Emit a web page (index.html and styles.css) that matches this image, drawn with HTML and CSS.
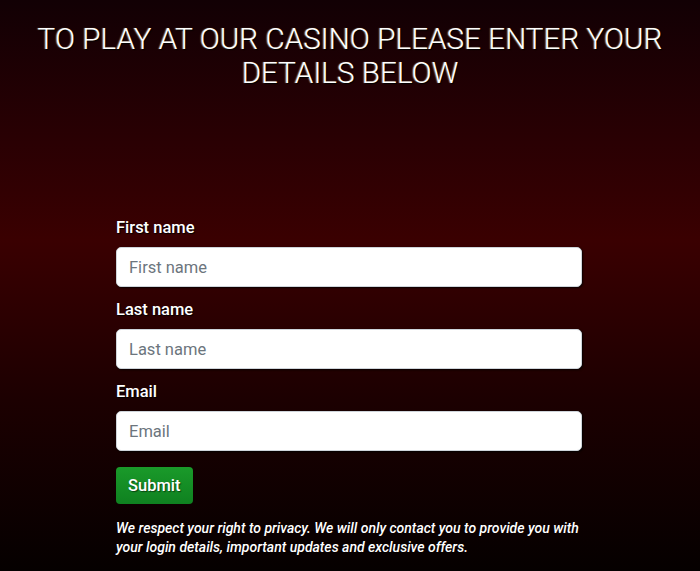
FILE: index.html
```html
<!DOCTYPE html>
<html lang="en">
	<head>
		<title>Casino sign up</title>
		<link rel="stylesheet" href="styles.css">
	</head>
	<body>
<div class="page">
	<h1 class="headline">To play at our casino please enter your details below</h1>

	<form class="signup" action="#">
		<label for="first">First name</label>
		<input type="text" id="first" placeholder="First name">

		<label for="last">Last name</label>
		<input type="text" id="last" placeholder="Last name">

		<label for="email">Email</label>
		<input type="email" id="email" placeholder="Email">

		<button type="submit" class="submit">Submit</button>

		<p class="privacy">We respect your right to privacy. We will only contact you to provide you with your login details, important updates and exclusive offers.</p>
	</form>
</div>
	</body>
</html>
```

FILE: styles.css
```css
html, body {height: 100%;}
body {
	margin: 0;
	font-family: Roboto, "Liberation Sans", sans-serif;
	color: #fff;
	background: linear-gradient(to bottom, #120004 0%, #2a0003 25%, #3a0001 42%, #1c0001 70%, #050000 100%);
}
.page {
	padding: 22px 20px 0;
}
.headline {
	margin: 0;
	text-align: center;
	font-weight: 300;
	font-size: 29.7px;
	line-height: 34px;
	text-transform: uppercase;
	text-shadow: 1px 1px 1px #000, -1px 0 1px rgba(255,240,180,0.5);
}
.signup {
	width: 466px;
	margin: 128px 0 0 96px;
	display: flex;
	flex-direction: column;
}
.signup label {
	font-size: 16.5px;
	font-weight: 500;
	line-height: 20px;
	margin-bottom: 9px;
	text-shadow: 1px 1px 1px #000;
}
.signup input {
	height: 40px;
	box-sizing: border-box;
	margin-bottom: 13px;
	padding: 0 12px;
	border: 1px solid #ced4da;
	border-radius: 5px;
	background: #fff;
	font-family: Roboto, "Liberation Sans", sans-serif;
	font-size: 16.5px;
	color: #333;
	box-shadow: inset 0 0 0 1px #fff, 1px 1px 2px rgba(0,0,0,0.8);
}
.signup input::placeholder {color: #6c757d;}
.submit {
	align-self: flex-start;
	margin-top: 3px;
	height: 37px;
	padding: 0 12px;
	border: none;
	border-radius: 4px;
	background: linear-gradient(#1a9a2a, #0f8120);
	color: #fff;
	font-family: Roboto, "Liberation Sans", sans-serif;
	font-size: 16.5px;
	font-weight: 500;
	text-shadow: 1px 1px 1px rgba(0,0,0,0.5);
	cursor: pointer;
}
.privacy {
	margin: 15px 0 0;
	font-size: 14px;
	line-height: 19px;
	font-style: italic;
	font-weight: 500;
}
```
